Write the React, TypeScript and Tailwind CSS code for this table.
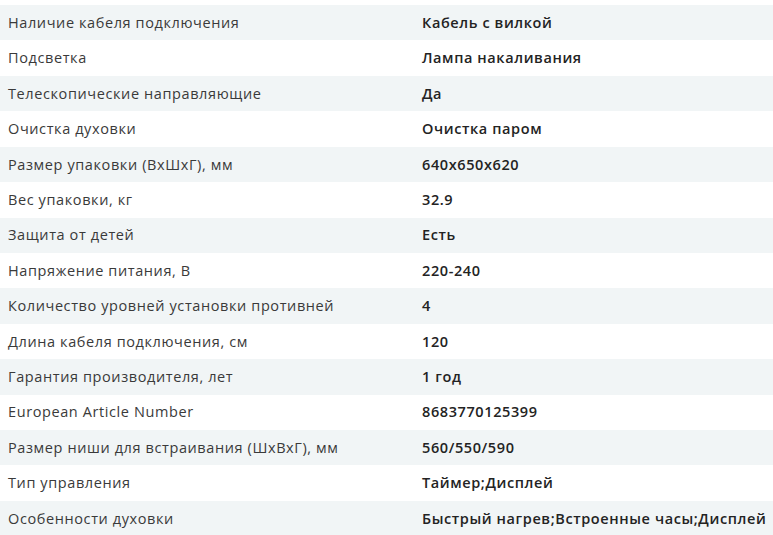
const rows: [string, string][] = [
  ["Наличие кабеля подключения", "Кабель с вилкой"],
  ["Подсветка", "Лампа накаливания"],
  ["Телескопические направляющие", "Да"],
  ["Очистка духовки", "Очистка паром"],
  ["Размер упаковки (ВхШхГ), мм", "640x650x620"],
  ["Вес упаковки, кг", "32.9"],
  ["Защита от детей", "Есть"],
  ["Напряжение питания, В", "220-240"],
  ["Количество уровней установки противней", "4"],
  ["Длина кабеля подключения, см", "120"],
  ["Гарантия производителя, лет", "1 год"],
  ["European Article Number", "8683770125399"],
  ["Размер ниши для встраивания (ШхВхГ), мм", "560/550/590"],
  ["Тип управления", "Таймер;Дисплей"],
  ["Особенности духовки", "Быстрый нагрев;Встроенные часы;Дисплей"],
];

export default function App() {
  return (
    <div
      className="w-[773px] h-[535px] overflow-hidden bg-white pt-[5px]"
      style={{ fontFamily: '"Open Sans", "Noto Sans", sans-serif' }}
    >
      {rows.map(([k, v], i) => (
        <div
          key={i}
          className={`flex items-center h-[35.43px] text-[14.5px] tracking-[0.6px] ${i % 2 === 0 ? "bg-[#f1f5f6]" : "bg-white"}`}
        >
          <div className="w-[422px] pl-[8px] text-[#3a3a3a] whitespace-nowrap">{k}</div>
          <div className="flex-1 font-semibold text-[#232323] whitespace-nowrap">{v}</div>
        </div>
      ))}
    </div>
  );
}
